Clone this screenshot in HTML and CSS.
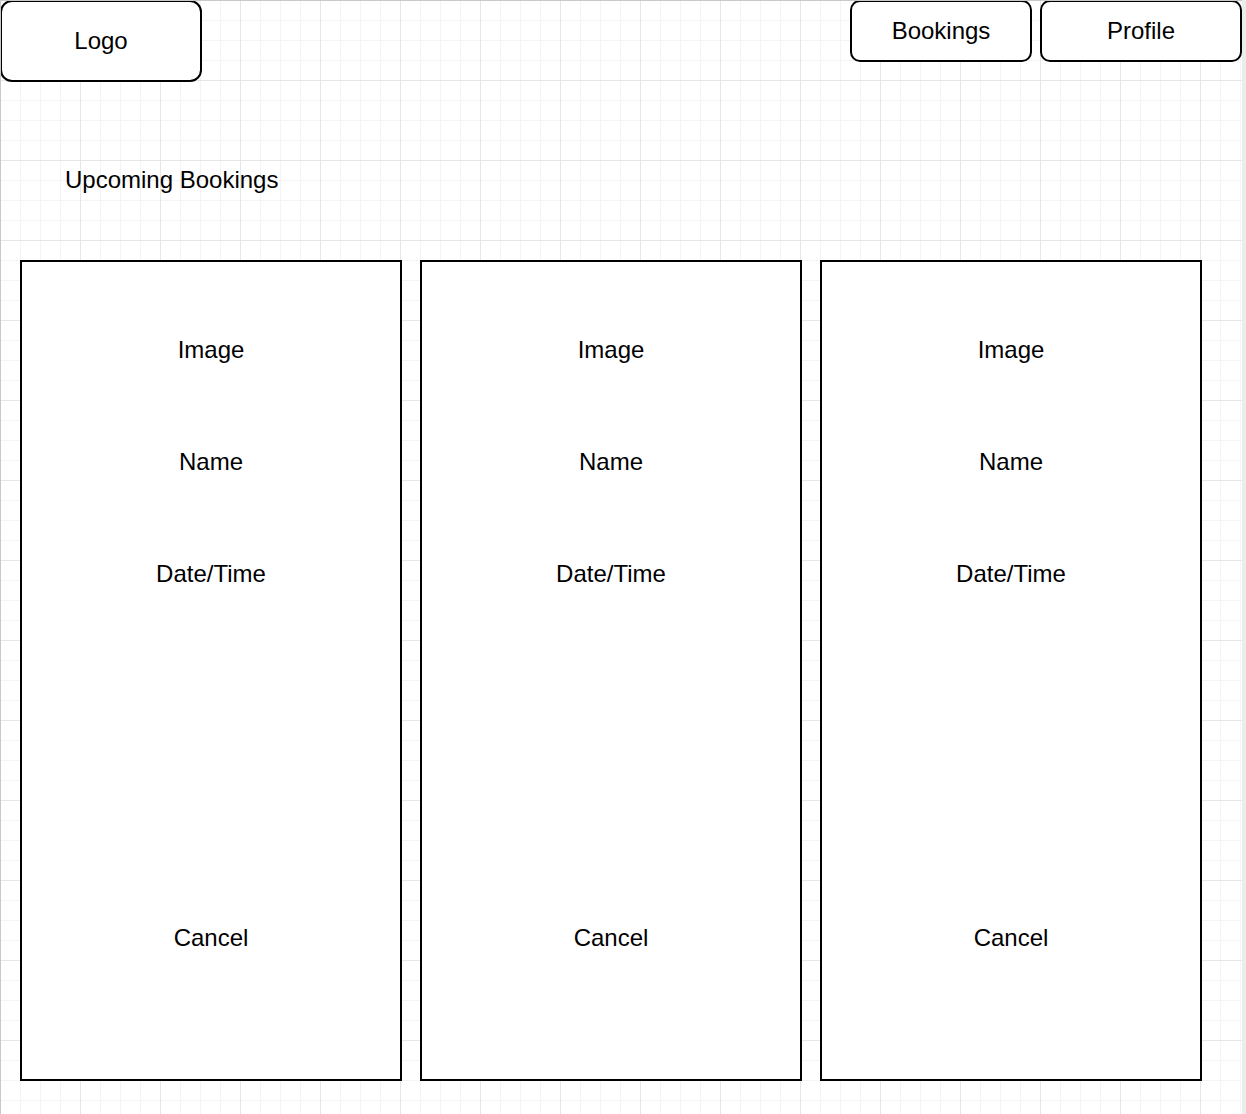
FILE: index.html
```html
<!DOCTYPE html>
<html lang="en">
<head>
<meta charset="UTF-8">
<meta name="viewport" content="width=device-width, initial-scale=1.0">
<title>Upcoming Bookings</title>
<link rel="stylesheet" href="styles.css">
</head>
<body>
  <div class="canvas">
    <div class="topbar">
      <div class="box logo">Logo</div>
      <div class="nav">
        <div class="box navBtn bookingsBtn">Bookings</div>
        <div class="box navBtn profileBtn">Profile</div>
      </div>
    </div>

    <div class="title">Upcoming Bookings</div>

    <div class="cards">
      <div class="card">
        <div class="line">Image</div>
        <div class="line">Name</div>
        <div class="line">Date/Time</div>
        <div class="line cancel">Cancel</div>
      </div>
      <div class="card">
        <div class="line">Image</div>
        <div class="line">Name</div>
        <div class="line">Date/Time</div>
        <div class="line cancel">Cancel</div>
      </div>
      <div class="card">
        <div class="line">Image</div>
        <div class="line">Name</div>
        <div class="line">Date/Time</div>
        <div class="line cancel">Cancel</div>
      </div>
    </div>
  </div>
</body>
</html>
```

FILE: styles.css
```css
  body {
    margin: 0;
    font-family: "Liberation Sans", Arial, sans-serif;
    font-size: 24px;
    color: #000;
    background-color: #ececec;
  }
  .canvas {
    width: 1242px;
    height: 1114px;
    box-sizing: border-box;
    border-top: 1px solid #c9c9c9;
    border-left: 1px solid #c9c9c9;
    background-color: #fff;
    background-image:
      linear-gradient(to right, #e6e6e6 1px, transparent 1px),
      linear-gradient(to bottom, #e6e6e6 1px, transparent 1px),
      linear-gradient(to right, #f4f4f4 1px, transparent 1px),
      linear-gradient(to bottom, #f4f4f4 1px, transparent 1px);
    background-size: 80px 80px, 80px 80px, 20px 20px, 20px 20px;
    background-position: -1px -1px;
    overflow: hidden;
  }
  .topbar {
    display: flex;
    justify-content: space-between;
    align-items: flex-start;
    margin-top: -1px;
    margin-left: -1px;
    height: 82px;
  }
  .box {
    display: flex;
    justify-content: center;
    align-items: center;
    box-sizing: border-box;
    border: 2px solid #000;
    border-radius: 12px;
    background-color: #fff;
  }
  .logo {
    width: 202px;
    height: 82px;
  }
  .nav {
    display: flex;
    gap: 8px;
  }
  .navBtn {
    height: 62px;
    border-radius: 10px;
  }
  .bookingsBtn {
    width: 182px;
  }
  .profileBtn {
    width: 202px;
  }
  .title {
    margin-top: 84px;
    padding-left: 64px;
    line-height: 28px;
  }
  .cards {
    display: grid;
    grid-template-columns: repeat(3, 382px);
    gap: 18px;
    margin-top: 66px;
    padding-left: 19px;
  }
  .card {
    display: flex;
    flex-direction: column;
    align-items: center;
    gap: 84px;
    box-sizing: border-box;
    height: 821px;
    padding-top: 74px;
    border: 2px solid #000;
    background-color: #fff;
  }
  .line {
    height: 28px;
    line-height: 28px;
  }
  .cancel {
    margin-top: 252px;
  }
```
